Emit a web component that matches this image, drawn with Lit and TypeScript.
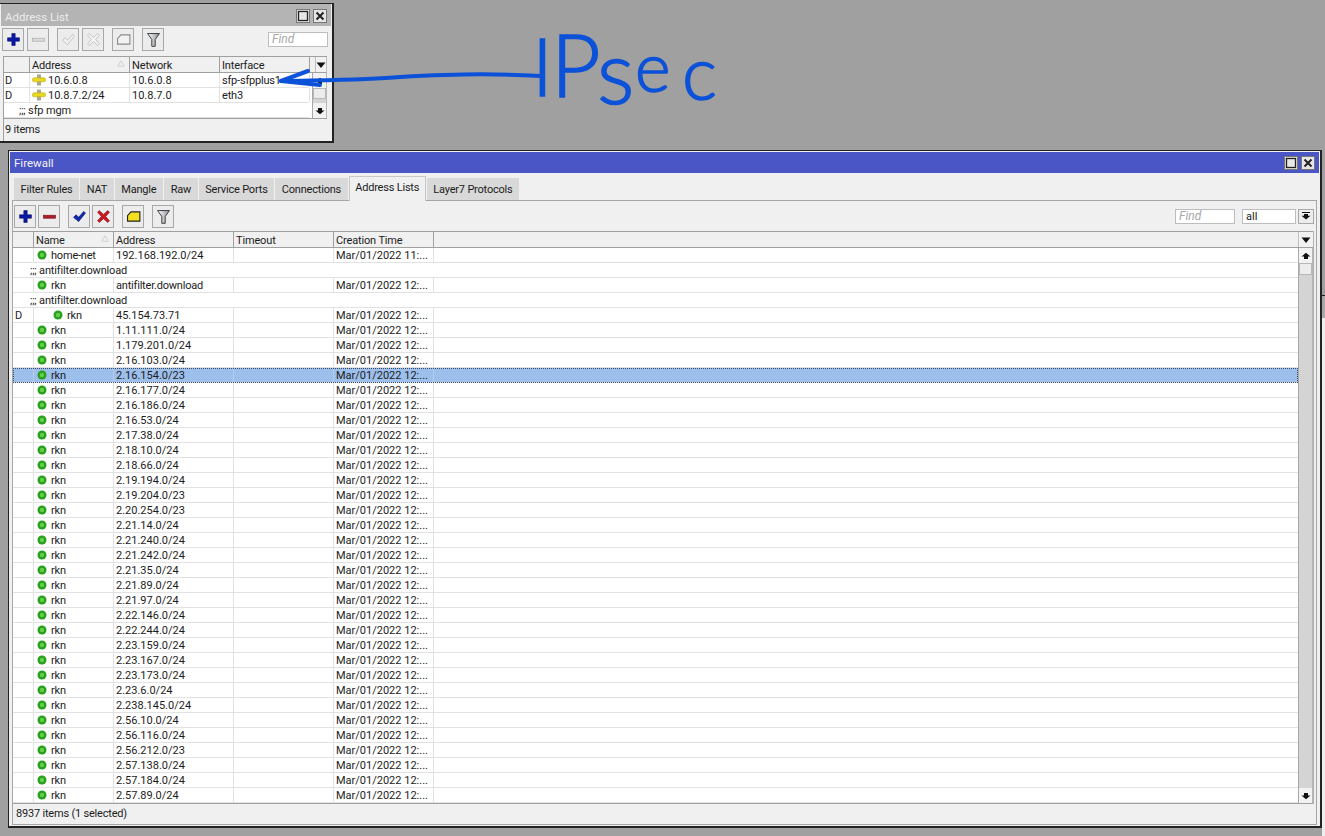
import { LitElement, css, html, svg } from 'lit'
import { customElement } from 'lit/decorators.js'

type Row = { comment?: string; flag?: string; name?: string; addr?: string; time?: string; sel?: boolean }

const time12 = 'Mar/01/2022 12:...'

const plain = [
  '1.11.111.0/24', '1.179.201.0/24', '2.16.103.0/24', '2.16.154.0/23', '2.16.177.0/24', '2.16.186.0/24',
  '2.16.53.0/24', '2.17.38.0/24', '2.18.10.0/24', '2.18.66.0/24', '2.19.194.0/24', '2.19.204.0/23',
  '2.20.254.0/23', '2.21.14.0/24', '2.21.240.0/24', '2.21.242.0/24', '2.21.35.0/24', '2.21.89.0/24',
  '2.21.97.0/24', '2.22.146.0/24', '2.22.244.0/24', '2.23.159.0/24', '2.23.167.0/24', '2.23.173.0/24',
  '2.23.6.0/24', '2.238.145.0/24', '2.56.10.0/24', '2.56.116.0/24', '2.56.212.0/23', '2.57.138.0/24',
  '2.57.184.0/24', '2.57.89.0/24',
]

const fwRows: Row[] = [
  { name: 'home-net', addr: '192.168.192.0/24', time: 'Mar/01/2022 11:...' },
  { comment: ';;; antifilter.download' },
  { name: 'rkn', addr: 'antifilter.download', time: time12 },
  { comment: ';;; antifilter.download' },
  { flag: 'D', name: 'rkn', addr: '45.154.73.71', time: time12 },
  ...plain.map((addr) => ({ name: 'rkn', addr, time: time12, sel: addr === '2.16.154.0/23' })),
]

const plus = (c: string) => svg`<path d="M8 3h4v5h5v4h-5v5H8v-5H3V8h5z" fill="${c}" stroke="#000050" stroke-width=".6"/>`
const minus = (c: string, s: string) => svg`<rect x="3" y="8.500" width="14" height="3.500" fill="${c}" stroke="${s}" stroke-width=".8"/>`
const check = (c: string, s: string) => svg`<path d="M3 11l3-3 3 3 6-7 2 2-8 10z" fill="${c}" stroke="${s}" stroke-width=".7"/>`
const cross = (c: string, s: string) => svg`<path d="M5 3l5 4.500 5-4.500 2 2-4.500 5 4.500 5-2 2-5-4.500-5 4.500-2-2 4.500-5-4.500-5z" fill="${c}" stroke="${s}" stroke-width=".7"/>`
const note = (c: string, s: string) => svg`<path d="M3 9 7 4.500h10.500v11H3z" fill="${c}" stroke="${s}" stroke-width="1.300"/>`
const filter = svg`<defs><linearGradient id="fg" x1="0" x2="1"><stop offset="0" stop-color="#ffffff"/><stop offset="1" stop-color="#8a8f98"/></linearGradient></defs>
  <path d="M3 3h14l-5 7v8H8v-8z" fill="url(#fg)" stroke="#333" stroke-width="1.100"/>`

const icon = (body: unknown) => html`<svg class="tool-ico" viewBox="0 0 20 20">${body}</svg>`
const dot = html`<svg class="dot" viewBox="0 0 10 10"><circle cx="5" cy="5" r="4.500" fill="#27a01c"/><circle cx="5" cy="5" r="2.200" fill="#63cf4c"/></svg>`
const ipIcon = html`<svg class="ip" viewBox="0 0 14 12"><rect x="5" y="0.500" width="4" height="11" fill="#a8a890"/><rect x="0.500" y="3.800" width="13" height="4" rx="1.500" fill="#e8d820" stroke="#b0a010" stroke-width=".5"/></svg>`
const sortMark = html`<svg class="sort" viewBox="0 0 8 7"><path d="M4 .8 7.200 6.200H.8z" fill="none" stroke="#d0d0d0"/></svg>`
const caret = (d: string) => html`<svg class="caret" viewBox="0 0 10 8"><path d="${d}" fill="#111"/></svg>`
const CARET_DOWN = 'M.5 1.500h9L5 7z'
const ARROW_UP = 'M5 .8 9.500 4.500H7V7H3V4.500H.5z'
const ARROW_DOWN = 'M3 1h4v2.500h2.500L5 7.200.5 3.500H3z'
const ARROW_DOWN_BAR = 'M1 0h8v1H1zM3 2h4v1.800h2.500L5 7.600.5 3.800H3z'

const winBtns = html`<div class="win-btns">
  <span class="win-btn"><svg viewBox="0 0 12 12"><rect x="1.500" y="1.500" width="9" height="9" fill="none" stroke="#222" stroke-width="1.300"/></svg></span>
  <span class="win-btn"><svg viewBox="0 0 12 12"><path d="M2.500 2.500l7 7M9.500 2.500l-7 7" stroke="#222" stroke-width="2"/></svg></span>
</div>`

@customElement('app-root')
export class AppRoot extends LitElement {
  private scrollbar(thumb: string) {
    return html`<div class="scroll">
      <span class="sb-btn">${caret(ARROW_UP)}</span>
      <span class="sb-thumb ${thumb}"></span>
      <span class="sb-track"></span>
      <span class="sb-btn">${caret(ARROW_DOWN)}</span>
    </div>`
  }

  private addressList() {
    return html`<section class="win addr">
      <header class="title">Address List ${winBtns}</header>
      <div class="toolbar">
        <button class="tb">${icon(plus('#0a1aa8'))}</button>
        <button class="tb">${icon(minus('#dcdcdc', '#a8a8a8'))}</button>
        <button class="tb gap">${icon(check('#f2f2f2', '#a8a8a8'))}</button>
        <button class="tb">${icon(cross('#f2f2f2', '#a8a8a8'))}</button>
        <button class="tb gap">${icon(note('#f2f2f2', '#8a8a8a'))}</button>
        <button class="tb gap">${icon(filter)}</button>
        <span class="grow"></span>
        <span class="find">Find</span>
      </div>
      <div class="table">
        <div class="thead">
          <div class="cols">
            <span class="th"></span>
            <span class="th">Address ${sortMark}</span>
            <span class="th">Network</span>
            <span class="th">Interface</span>
            <span class="th"></span>
          </div>
          <span class="menu">${caret(CARET_DOWN)}</span>
        </div>
        <div class="tbody">
          <div class="rows">
            <div class="row">
              <span class="td">D</span><span class="td ipc">${ipIcon}10.6.0.8</span><span class="td">10.6.0.8</span><span class="td word">sfp-sfpplus1</span><span class="td"></span>
            </div>
            <div class="row">
              <span class="td">D</span><span class="td ipc">${ipIcon}10.8.7.2/24</span><span class="td">10.8.7.0</span><span class="td word">eth3</span><span class="td"></span>
            </div>
            <div class="row note">;;; sfp mgm</div>
          </div>
          ${this.scrollbar('short')}
        </div>
      </div>
      <footer class="status">9 items</footer>
    </section>`
  }

  private firewall() {
    const tabs = ['Filter Rules', 'NAT', 'Mangle', 'Raw', 'Service Ports', 'Connections', 'Address Lists', 'Layer7 Protocols']
    return html`<section class="win fw">
      <header class="title">Firewall ${winBtns}</header>
      <nav class="tabs">
        ${tabs.map((t) => html`<span class="tab ${t === 'Address Lists' ? 'active' : ''}">${t}</span>`)}
      </nav>
      <div class="panel">
        <div class="toolbar">
          <button class="tb">${icon(plus('#0a1aa8'))}</button>
          <button class="tb">${icon(minus('#b01c2c', '#7a1420'))}</button>
          <button class="tb gap">${icon(check('#0c2cb0', '#000060'))}</button>
          <button class="tb">${icon(cross('#d01820', '#701010'))}</button>
          <button class="tb gap">${icon(note('#f4e020', '#222'))}</button>
          <button class="tb gap">${icon(filter)}</button>
          <span class="grow"></span>
          <span class="find">Find</span>
          <span class="all">all</span>
          <span class="all-drop">${caret(ARROW_DOWN_BAR)}</span>
        </div>
        <div class="table">
          <div class="thead">
            <div class="cols">
              <span class="th"></span>
              <span class="th">Name ${sortMark}</span>
              <span class="th">Address</span>
              <span class="th">Timeout</span>
              <span class="th">Creation Time</span>
              <span class="th"></span>
            </div>
            <span class="menu">${caret(CARET_DOWN)}</span>
          </div>
          <div class="tbody">
            <div class="rows">
              ${fwRows.map((r) =>
                r.comment
                  ? html`<div class="row note">${r.comment}</div>`
                  : html`<div class="row ${r.sel ? 'sel' : ''}">
                      <span class="td">${r.flag ?? ''}</span>
                      <span class="td nm word ${r.flag ? 'dyn' : ''}">${dot}${r.name}</span>
                      <span class="td ${/[a-z]/.test(r.addr ?? '') ? 'word' : ''}">${r.addr}</span>
                      <span class="td"></span>
                      <span class="td">${r.time}</span>
                      <span class="td"></span>
                    </div>`,
              )}
            </div>
            ${this.scrollbar('')}
          </div>
        </div>
        <footer class="status">8937 items (1 selected)</footer>
      </div>
    </section>`
  }

  public render() {
    return html`
      <div class="desktop">
        <div class="behind"></div>
        ${this.addressList()}
        ${this.firewall()}
        <svg class="ink" viewBox="0 0 1325 140">
          <path d="M541 76C500 74 470 73 400 77C370 80 330 80 281 81" />
          <path d="M308 71L281 81L320 85" />
          <text x="532" y="96" font-size="80">I</text>
          <text x="551" y="97" font-size="86">P</text>
          <text x="597" y="104" font-size="88">s</text>
          <text x="635" y="92" font-size="68">e</text>
          <text x="682" y="100" font-size="74">c</text>
        </svg>
      </div>
    `
  }

  public static styles = css`
    :host {
      display: block;
      width: 1325px;
      height: 836px;
      font: 11px Roboto, 'Liberation Sans', Arial, sans-serif;
      color: #1c1c1c;
    }
    .desktop {
      position: relative;
      width: 1325px;
      height: 836px;
      overflow: hidden;
      background: #a0a0a0;
    }
    .behind {
      position: absolute;
      left: 1322px;
      top: 295px;
      width: 10px;
      height: 541px;
      border-top: 1px solid #1c1c1c;
      background: linear-gradient(#a8a8a8 22px, #efefef 22px);
    }

    /* windows */
    .win {
      position: absolute;
      display: flex;
      flex-direction: column;
      box-sizing: border-box;
      background: #f0f0f0;
      border: 1px solid #222;
    }
    .addr {
      left: -1px;
      top: 3px;
      width: 335px;
      height: 140px;
      padding: 0 1px 0 1px;
      border-width: 1px 2px 2px 1px;
    }
    .fw {
      left: 8px;
      top: 150px;
      width: 1314px;
      height: 678px;
      border-width: 1px 2px 2px 1px;
      padding: 1px 3px 1px 3px;
    }
    .title {
      display: flex;
      align-items: center;
      justify-content: space-between;
      height: 22px;
      flex: none;
      padding: 0 4px;
      font-size: 11.500px;
      background: #b4b4b4;
      color: #ececec;
    }
    .addr .title {
      padding-top: 3px;
      box-sizing: border-box;
    }
    .fw .title {
      margin: 0 -2px;
      height: 21px;
      background: #4a56c6;
      color: #f2f2f2;
    }
    .win-btns {
      display: flex;
      gap: 3px;
    }
    .addr .win-btns {
      margin-top: -2px;
    }
    .win-btn {
      display: grid;
      place-items: center;
      width: 14px;
      height: 14px;
      box-sizing: border-box;
      border: 1px solid #777;
      background: #e6e6e6;
    }
    .win-btn svg {
      width: 12px;
      height: 12px;
    }

    /* tabs */
    .tabs {
      display: flex;
      align-items: flex-end;
      gap: 1px;
      height: 27px;
      flex: none;
      padding-left: 2px;
    }
    .tab {
      display: grid;
      place-items: center;
      height: 22px;
      padding: 0 6.600px;
      box-sizing: border-box;
      background: #d9d9d9;
      letter-spacing: -0.2px;
    }
    .tab.active {
      height: 25px;
      margin-bottom: -1px;
      padding: 0 5.500px 3px;
      position: relative;
      background: #f0f0f0;
      border: 1px solid #c8c8c8;
      border-bottom: 0;
    }
    .panel {
      flex: 1;
      min-height: 0;
      display: flex;
      flex-direction: column;
      border: 1px solid #a6a6a6;
    }

    /* toolbar */
    .toolbar {
      display: flex;
      align-items: center;
      gap: 2px;
      flex: none;
    }
    .addr .toolbar {
      height: 30px;
      gap: 3px;
      padding: 0 3px 4px 1px;
      box-sizing: border-box;
    }
    .fw .toolbar {
      height: 30px;
      padding: 0 2px 0 1px;
    }
    .tb {
      display: grid;
      place-items: center;
      width: 22px;
      height: 23px;
      padding: 0;
      border: 1px solid #a8a8a8;
      background: #ececec;
    }
    .tb.gap {
      margin-left: 6px;
    }
    .addr .tb.gap {
      margin-left: 5px;
    }
    .tool-ico {
      width: 17px;
      height: 17px;
    }
    .grow {
      flex: 1;
    }
    .find,
    .all {
      height: 15px;
      width: 60px;
      box-sizing: border-box;
      border: 1px solid #bdbdbd;
      background: #fff;
      padding-left: 3px;
      line-height: 13px;
      font-style: italic;
      color: #a8a8a8;
    }
    .find {
      font-size: 12px;
    }
    .all {
      width: 54px;
      margin-left: 5px;
      font-style: normal;
      color: #222;
    }
    .all-drop {
      display: grid;
      place-items: center;
      width: 16px;
      height: 15px;
      box-sizing: border-box;
      border: 1px solid #a8a8a8;
      background: #ececec;
    }

    /* table */
    .table {
      flex: none;
      display: flex;
      flex-direction: column;
    }
    .addr .table {
      margin: 0 4px 0 2px;
      border-left: 1px solid #a0a0a0;
    }
    .fw .table {
      border-right: 1px solid #b0b0b0;
      margin-right: 2px;
    }
    .thead {
      display: flex;
      height: 17px;
      box-sizing: border-box;
      border-top: 1px solid #a0a0a0;
      border-bottom: 1px solid #a0a0a0;
    }
    .thead .cols {
      flex: 1;
    }
    .menu {
      display: grid;
      place-items: center;
      width: 15px;
      box-sizing: border-box;
      border-left: 1px solid #c0c0c0;
      background: #f2f2f2;
    }
    .addr .menu {
      margin-left: 3px;
      border-right: 1px solid #c0c0c0;
    }
    .cols,
    .row {
      display: grid;
    }
    .addr .cols,
    .addr .row {
      grid-template-columns: 26px 100px 90px 90px 1fr;
    }
    .fw .cols,
    .fw .row {
      grid-template-columns: 21px 80px 120px 100px 100px 1fr;
    }
    .th {
      position: relative;
      padding-left: 2px;
      line-height: 17px;
      height: 15px;
      letter-spacing: -0.15px;
      border-right: 1px solid #a0a0a0;
      white-space: nowrap;
    }
    .th:last-child {
      border-right: 0;
    }
    .sort {
      position: absolute;
      right: 4px;
      top: 3px;
      width: 8px;
      height: 7px;
    }
    .caret {
      width: 10px;
      height: 8px;
    }
    .tbody {
      display: flex;
      border-bottom: 1px solid #a0a0a0;
      background: #fff;
    }
    .rows {
      flex: 1;
      min-width: 0;
    }
    .row {
      height: 15px;
      box-sizing: border-box;
      line-height: 16px;
      border-bottom: 1px solid #e2e2e2;
      white-space: nowrap;
    }
    .row.note {
      display: block;
      padding-left: 17px;
      overflow: hidden;
      letter-spacing: -0.15px;
    }
    .addr .row.note {
      padding-left: 15px;
    }
    .row.sel {
      background: #9dbfec;
      outline: 1px dotted #3c4a60;
      outline-offset: -1px;
    }
    .td {
      height: 14px;
      padding-left: 2px;
      border-right: 1px solid #e2e2e2;
      overflow: hidden;
    }
    .td.word {
      letter-spacing: -0.2px;
    }
    .td:last-child {
      border-right: 0;
    }
    .addr .td:first-child {
      padding-left: 1px;
    }
    .row.sel .td {
      border-right-color: #b4cdee;
    }
    .nm {
      display: flex;
      align-items: flex-start;
      gap: 4px;
      padding-left: 3px;
    }
    .nm.dyn {
      padding-left: 19px;
    }
    .ipc {
      display: flex;
      align-items: flex-start;
      gap: 2px;
      padding-left: 2px;
    }
    .dot {
      width: 10px;
      height: 10px;
      flex: none;
      margin-top: 2px;
    }
    .ip {
      width: 14px;
      height: 12px;
      flex: none;
      margin-top: 1px;
    }
    .scroll {
      display: flex;
      flex-direction: column;
      flex: none;
      width: 15px;
      box-sizing: border-box;
      border-left: 1px solid #a8a8a8;
      border-right: 1px solid #b8b8b8;
      background: #d4d4d4;
    }
    .addr .scroll {
      margin-left: 3px;
    }
    .sb-btn {
      display: grid;
      place-items: center;
      height: 15px;
      flex: none;
      background: #f2f2f2;
    }
    .sb-thumb {
      height: 12px;
      flex: none;
      box-sizing: border-box;
      border: 1px solid #b8b8b8;
      background: #ececec;
    }
    .sb-thumb.short {
      height: 11px;
    }
    .sb-track {
      flex: 1;
    }
    .status {
      display: flex;
      align-items: center;
      flex: 1;
      padding: 0 0 2px 3px;
      letter-spacing: -0.2px;
    }
    .addr .status {
      padding: 0 0 2px 1px;
      border-left: 1px solid #a0a0a0;
      margin-left: 2px;
    }

    /* hand written note, drawn over everything */
    .ink {
      position: absolute;
      left: 0;
      top: 0;
      width: 1325px;
      height: 140px;
      pointer-events: none;
    }
    .ink path {
      fill: none;
      stroke: #0c52d8;
      stroke-width: 4;
      stroke-linecap: round;
      stroke-linejoin: round;
    }
    .ink text {
      font-family: Lato, 'Open Sans', sans-serif;
      font-weight: 300;
      fill: #0c52d8;
      stroke: #0c52d8;
      stroke-width: 1.500;
    }
  `
}
